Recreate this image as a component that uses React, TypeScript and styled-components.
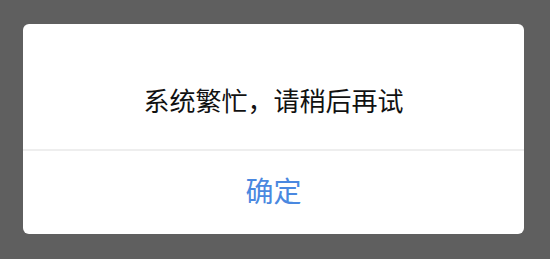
import React from 'react';
import styled, { createGlobalStyle } from 'styled-components';

const GlobalStyle = createGlobalStyle`
  html, body {
    margin: 0;
    padding: 0;
    background: #5f5f5f;
  }
  body {
    font-family: 'Noto Sans CJK SC', 'Noto Sans', sans-serif;
  }
`;

const Overlay = styled.div`
  width: 550px;
  height: 259px;
  box-sizing: border-box;
  padding: 24px 26px 0 23px;
  background: #5f5f5f;
`;

const DialogBox = styled.div`
  width: 501px;
  height: 210px;
  display: flex;
  flex-direction: column;
  background: #ffffff;
  border-radius: 6px;
  overflow: hidden;
`;

const Message = styled.div`
  height: 127px;
  box-sizing: border-box;
  padding-top: 63px;
  text-align: center;
  font-size: 26px;
  line-height: 26px;
  color: #111111;
  border-bottom: 2px solid #eeeeee;
`;

const ConfirmButton = styled.button`
  flex: 1;
  border: none;
  background: transparent;
  padding: 0 0 6px;
  font-family: inherit;
  font-size: 28px;
  line-height: 28px;
  color: #4a88e0;
  cursor: pointer;
`;

const App = () => {
  return (
    <>
      <GlobalStyle />
      <Overlay>
        <DialogBox>
          <Message>系统繁忙，请稍后再试</Message>
          <ConfirmButton>确定</ConfirmButton>
        </DialogBox>
      </Overlay>
    </>
  );
};

export default App;
